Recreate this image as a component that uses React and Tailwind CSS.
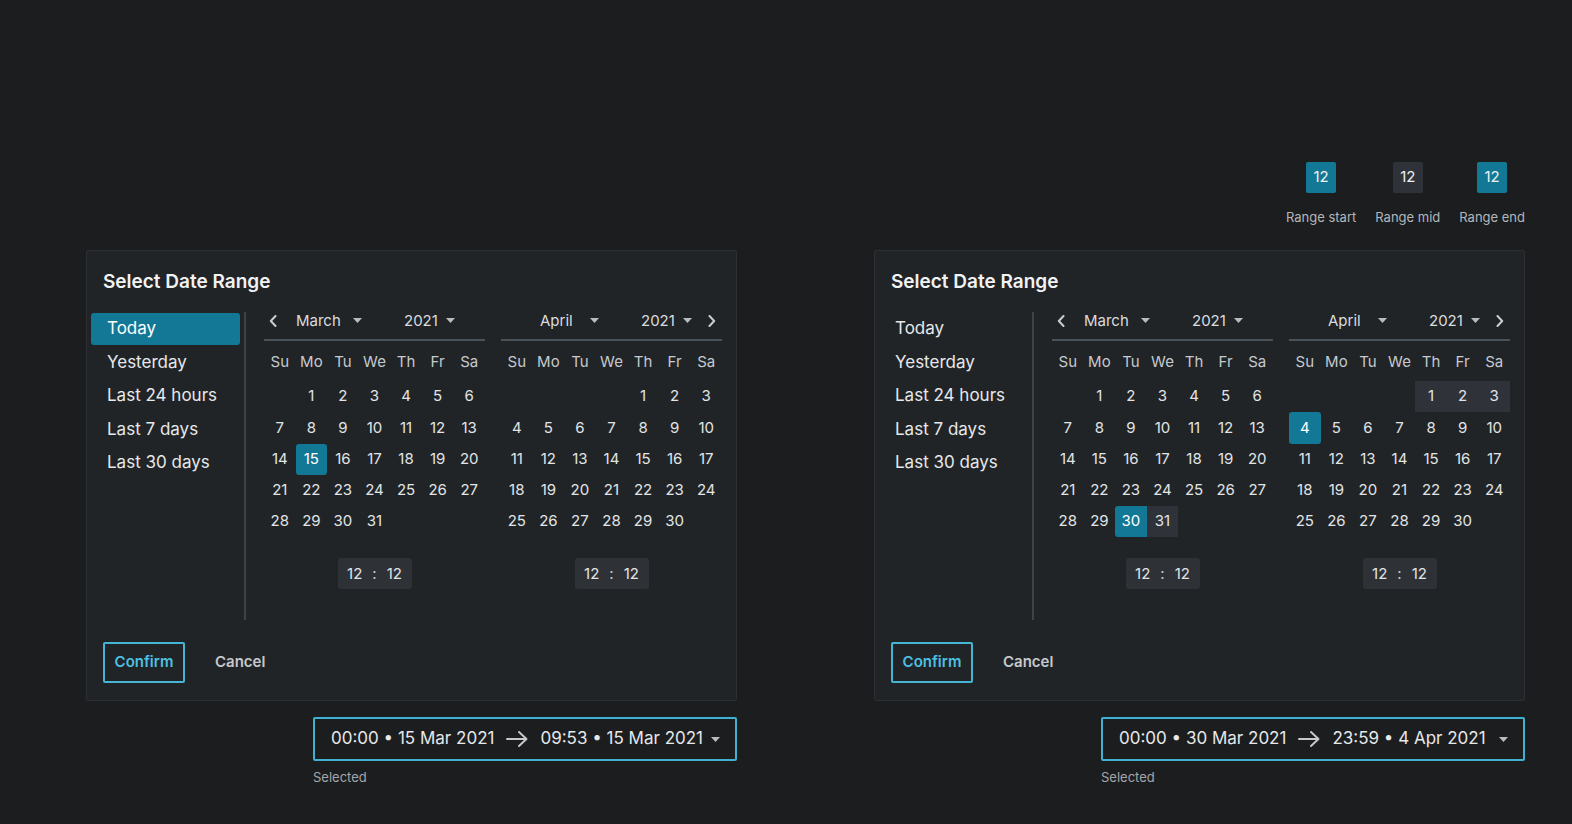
import React from "react";

const DOW = ["Su", "Mo", "Tu", "We", "Th", "Fr", "Sa"];
const PRESETS = ["Today", "Yesterday", "Last 24 hours", "Last 7 days", "Last 30 days"];

function Caret() {
  return (
    <svg width="9" height="5" viewBox="0 0 9 5" className="shrink-0">
      <path d="M0 0 L9 0 L4.5 5 Z" fill="#b7bcc1" />
    </svg>
  );
}

function Chevron({ dir }) {
  return (
    <svg width="8" height="12" viewBox="0 0 8 12" className="shrink-0">
      <path
        d={dir === "left" ? "M6.5 1 L1.8 6 L6.5 11" : "M1.5 1 L6.2 6 L1.5 11"}
        fill="none"
        stroke="#c9cdd1"
        strokeWidth="2"
        strokeLinecap="round"
        strokeLinejoin="round"
      />
    </svg>
  );
}

function ArrowRight() {
  return (
    <svg width="22" height="16" viewBox="0 0 22 16" className="shrink-0">
      <path
        d="M1 8 H20.5 M13 1 L20.5 8 L13 15"
        fill="none"
        stroke="#c7cacd"
        strokeWidth="1.9"
        strokeLinecap="round"
        strokeLinejoin="round"
      />
    </svg>
  );
}

function Calendar({ side, month, offset, days, marks }) {
  const cells = [];
  for (let i = 0; i < offset; i++) cells.push(null);
  for (let d = 1; d <= days; d++) cells.push(d);
  return (
    <div className="w-[221px] flex flex-col">
      <div className="h-[28px] border-b-2 border-[#4a5259]">
        <div className="h-[15px] flex items-center text-[15px] leading-[15px] text-[#d9dcdf]">
          {side === "left" ? (
            <>
              <div className="w-[32px] pl-[5px] flex items-center">
                <Chevron dir="left" />
              </div>
              <div className="w-[72px] pr-[6px] flex items-center justify-between">
                <span>{month}</span>
                <Caret />
              </div>
              <div className="ml-[36px] flex items-center gap-[8px]">
                <span>2021</span>
                <Caret />
              </div>
            </>
          ) : (
            <>
              <div className="ml-[39px] w-[65px] pr-[6px] flex items-center justify-between">
                <span>{month}</span>
                <Caret />
              </div>
              <div className="ml-[36px] flex items-center gap-[8px]">
                <span>2021</span>
                <Caret />
              </div>
              <div className="ml-auto pr-[6px] flex items-center">
                <Chevron dir="right" />
              </div>
            </>
          )}
        </div>
      </div>
      <div className="grid grid-cols-7 h-[40px] pt-[2px] items-center text-[15px] text-[#c6cacf]">
        {DOW.map((d) => (
          <div key={d} className="text-center">
            {d}
          </div>
        ))}
      </div>
      <div className="grid grid-cols-7 auto-rows-[31.25px] text-[15px] text-[#e2e4e6]">
        {cells.map((d, i) => {
          const m = d ? marks[d] : null;
          let cls = "";
          if (m === "single") cls = "bg-[#137896] rounded-[3px] text-white";
          else if (m === "start") cls = "bg-[#137896] rounded-l-[3px] text-white";
          else if (m === "end") cls = "bg-[#137896] rounded-[3px] text-white";
          else if (m === "mid") cls = "bg-[#2f3339]";
          return (
            <div key={i} className={"flex items-center justify-center " + cls}>
              {d || ""}
            </div>
          );
        })}
      </div>
      <div className="mt-[21px] flex justify-center">
        <div className="w-[74px] h-[31px] rounded-[3px] bg-[#2e3237] flex items-center justify-center gap-[10px] text-[15px] text-[#e2e4e6]">
          <span>12</span>
          <span className="text-[#c6cacf]">:</span>
          <span>12</span>
        </div>
      </div>
    </div>
  );
}

function Panel({ todaySelected, left, right, from, to }) {
  return (
    <div className="flex flex-col">
      <div className="w-[651px] h-[451px] bg-[#212427] border border-[#2c3035] rounded-[2px] flex flex-col">
        <div className="pt-[19px] pl-[16px] text-[19px] leading-[24px] font-semibold text-[#f1f2f3]">
          Select Date Range
        </div>
        <div className="mt-[18px] flex h-[308px]">
          <div className="ml-[4px] pt-[1px] w-[149px] flex flex-col gap-[1.5px]">
            {PRESETS.map((p, i) => (
              <div
                key={p}
                className={
                  "h-[32px] pl-[16px] flex items-center text-[17px] rounded-[3px] " +
                  (todaySelected && i === 0 ? "bg-[#137896] text-white" : "text-[#e6e8ea]")
                }
              >
                {p}
              </div>
            ))}
          </div>
          <div className="ml-[4px] w-[2px] bg-[#3c4349]" />
          <div className="ml-[18px] pt-[1px] flex gap-[16px]">
            <Calendar side="left" {...left} />
            <Calendar side="right" {...right} />
          </div>
        </div>
        <div className="mt-[22px] ml-[16px] flex items-center gap-[30px]">
          <div className="w-[82px] h-[41px] border-2 border-[#45b5d6] rounded-[2px] flex items-center justify-center text-[15px] font-semibold text-[#4cc0e2]">
            Confirm
          </div>
          <div className="text-[15px] font-semibold text-[#c5c8cb]">Cancel</div>
        </div>
      </div>
      <div className="mt-[16px] self-end w-[424px] h-[44px] border-2 border-[#3fb2d3] rounded-[2px] flex items-center pl-[16px] pr-[15px] text-[17px] text-[#e6e8ea]">
        <span>{from}</span>
        <span className="mx-[12px] flex items-center">
          <ArrowRight />
        </span>
        <span>{to}</span>
        <span className="ml-auto">
          <Caret />
        </span>
      </div>
      <div className="self-end w-[424px] mt-[7px] text-[13px] text-[#a3a7ab]">Selected</div>
    </div>
  );
}

function Legend() {
  const items = [
    { label: "Range start", cls: "bg-[#137896]" },
    { label: "Range mid", cls: "bg-[#2f3339]" },
    { label: "Range end", cls: "bg-[#137896]" },
  ];
  return (
    <div className="h-[88px] flex justify-end gap-[19px]">
      {items.map((it) => (
        <div key={it.label} className="flex flex-col items-center">
          <div
            className={
              "w-[30px] h-[31px] rounded-[2px] flex items-center justify-center text-[15px] text-[#eef0f1] " +
              it.cls
            }
          >
            12
          </div>
          <div className="mt-[15px] text-[13px] text-[#b3b7bb]">{it.label}</div>
        </div>
      ))}
    </div>
  );
}

export default function App() {
  return (
    <div className="w-[1572px] h-[824px] bg-[#1c1d1f] font-['Inter',sans-serif] overflow-hidden">
      <div className="pt-[162px] pl-[86px] flex gap-[137px]">
        <div className="flex flex-col">
          <div className="h-[88px]" />
          <Panel
            todaySelected
            left={{ month: "March", offset: 1, days: 31, marks: { 15: "single" } }}
            right={{ month: "April", offset: 4, days: 30, marks: {} }}
            from="00:00 • 15 Mar 2021"
            to="09:53 • 15 Mar 2021"
          />
        </div>
        <div className="flex flex-col">
          <Legend />
          <Panel
            left={{ month: "March", offset: 1, days: 31, marks: { 30: "start", 31: "mid" } }}
            right={{ month: "April", offset: 4, days: 30, marks: { 1: "mid", 2: "mid", 3: "mid", 4: "end" } }}
            from="00:00 • 30 Mar 2021"
            to="23:59 • 4 Apr 2021"
          />
        </div>
      </div>
    </div>
  );
}
